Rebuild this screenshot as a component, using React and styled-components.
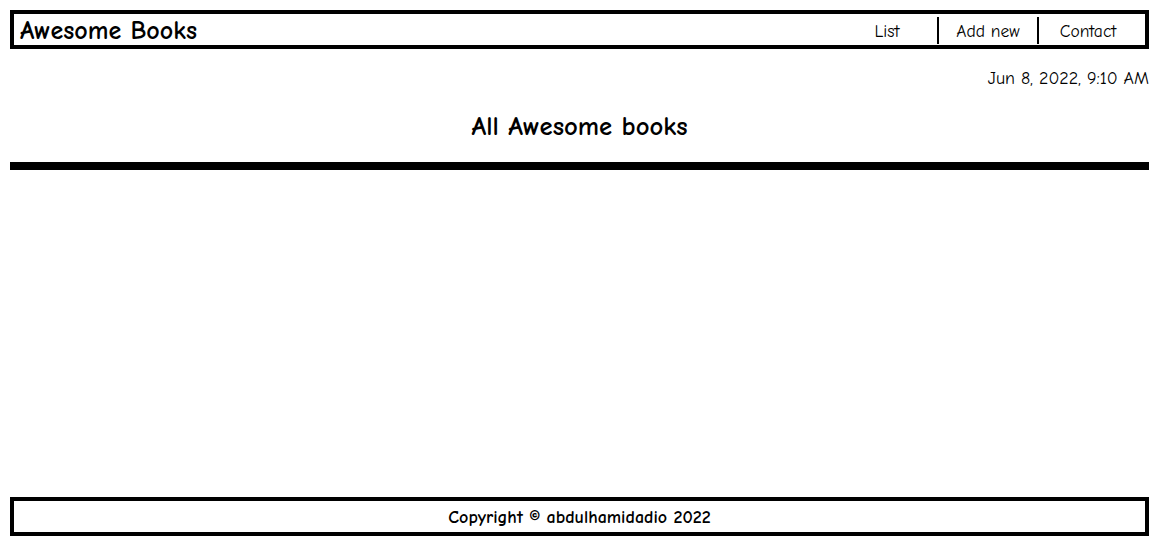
import styled, { createGlobalStyle } from "styled-components";

const GlobalStyle = createGlobalStyle`
  * {
    box-sizing: border-box;
  }

  body {
    margin: 0;
    background: #ffffff;
    color: #000000;
    font-family: "Comic Sans MS", "Comic Neue", "DejaVu Sans", sans-serif;
  }
`;

const App = () => {
  return (
    <>
      <GlobalStyle />
      <Page>
        <Header>
          <Logo>Awesome Books</Logo>
          <NavList>
            <NavItem>List</NavItem>
            <NavItem divider>Add new</NavItem>
            <NavItem divider>Contact</NavItem>
          </NavList>
        </Header>

        <DateLine>Jun 8, 2022, 9:10 AM</DateLine>

        <Main>
          <Title>All Awesome books</Title>
          <Rule />
        </Main>

        <Footer>
          <span>Copyright © abdulhamidadio 2022</span>
        </Footer>
      </Page>
    </>
  );
};

export default App;

const Page = styled.div`
  min-height: 100vh;
  display: flex;
  flex-direction: column;
  padding: 10px 10px 12px 10px;
`;

const Header = styled.header`
  height: 39px;
  border: 4px solid #000000;
  display: flex;
  align-items: center;
  justify-content: space-between;
  padding: 2px 0 0 6px;
`;

const Logo = styled.h1`
  margin: 0;
  font-size: 26px;
  font-weight: 700;
  line-height: 28px;
`;

const NavList = styled.ul`
  list-style: none;
  margin: 0;
  padding: 0 8px 0 0;
  display: flex;
  align-items: center;
  height: 100%;
`;

const NavItem = styled.li`
  width: 100px;
  height: 27px;
  font-size: 17.5px;
  display: flex;
  align-items: center;
  justify-content: center;
  border-left: ${(props) => (props.divider ? "2px solid #000000" : "none")};
  cursor: pointer;
`;

const DateLine = styled.p`
  margin: 18px 0 0 0;
  text-align: right;
  font-size: 17.9px;
  line-height: 22px;
`;

const Main = styled.main`
  display: flex;
  flex-direction: column;
  align-items: center;
`;

const Title = styled.h2`
  margin: 22px 0 0 0;
  font-size: 26.7px;
  font-weight: 700;
  line-height: 32px;
`;

const Rule = styled.hr`
  width: 100%;
  height: 8px;
  margin: 19px 0 0 0;
  border: none;
  background: #000000;
`;

const Footer = styled.footer`
  margin-top: auto;
  height: 39px;
  border: 4px solid #000000;
  display: flex;
  align-items: center;
  justify-content: center;
  padding-top: 2px;
  font-size: 18px;
  font-weight: 700;
`;
